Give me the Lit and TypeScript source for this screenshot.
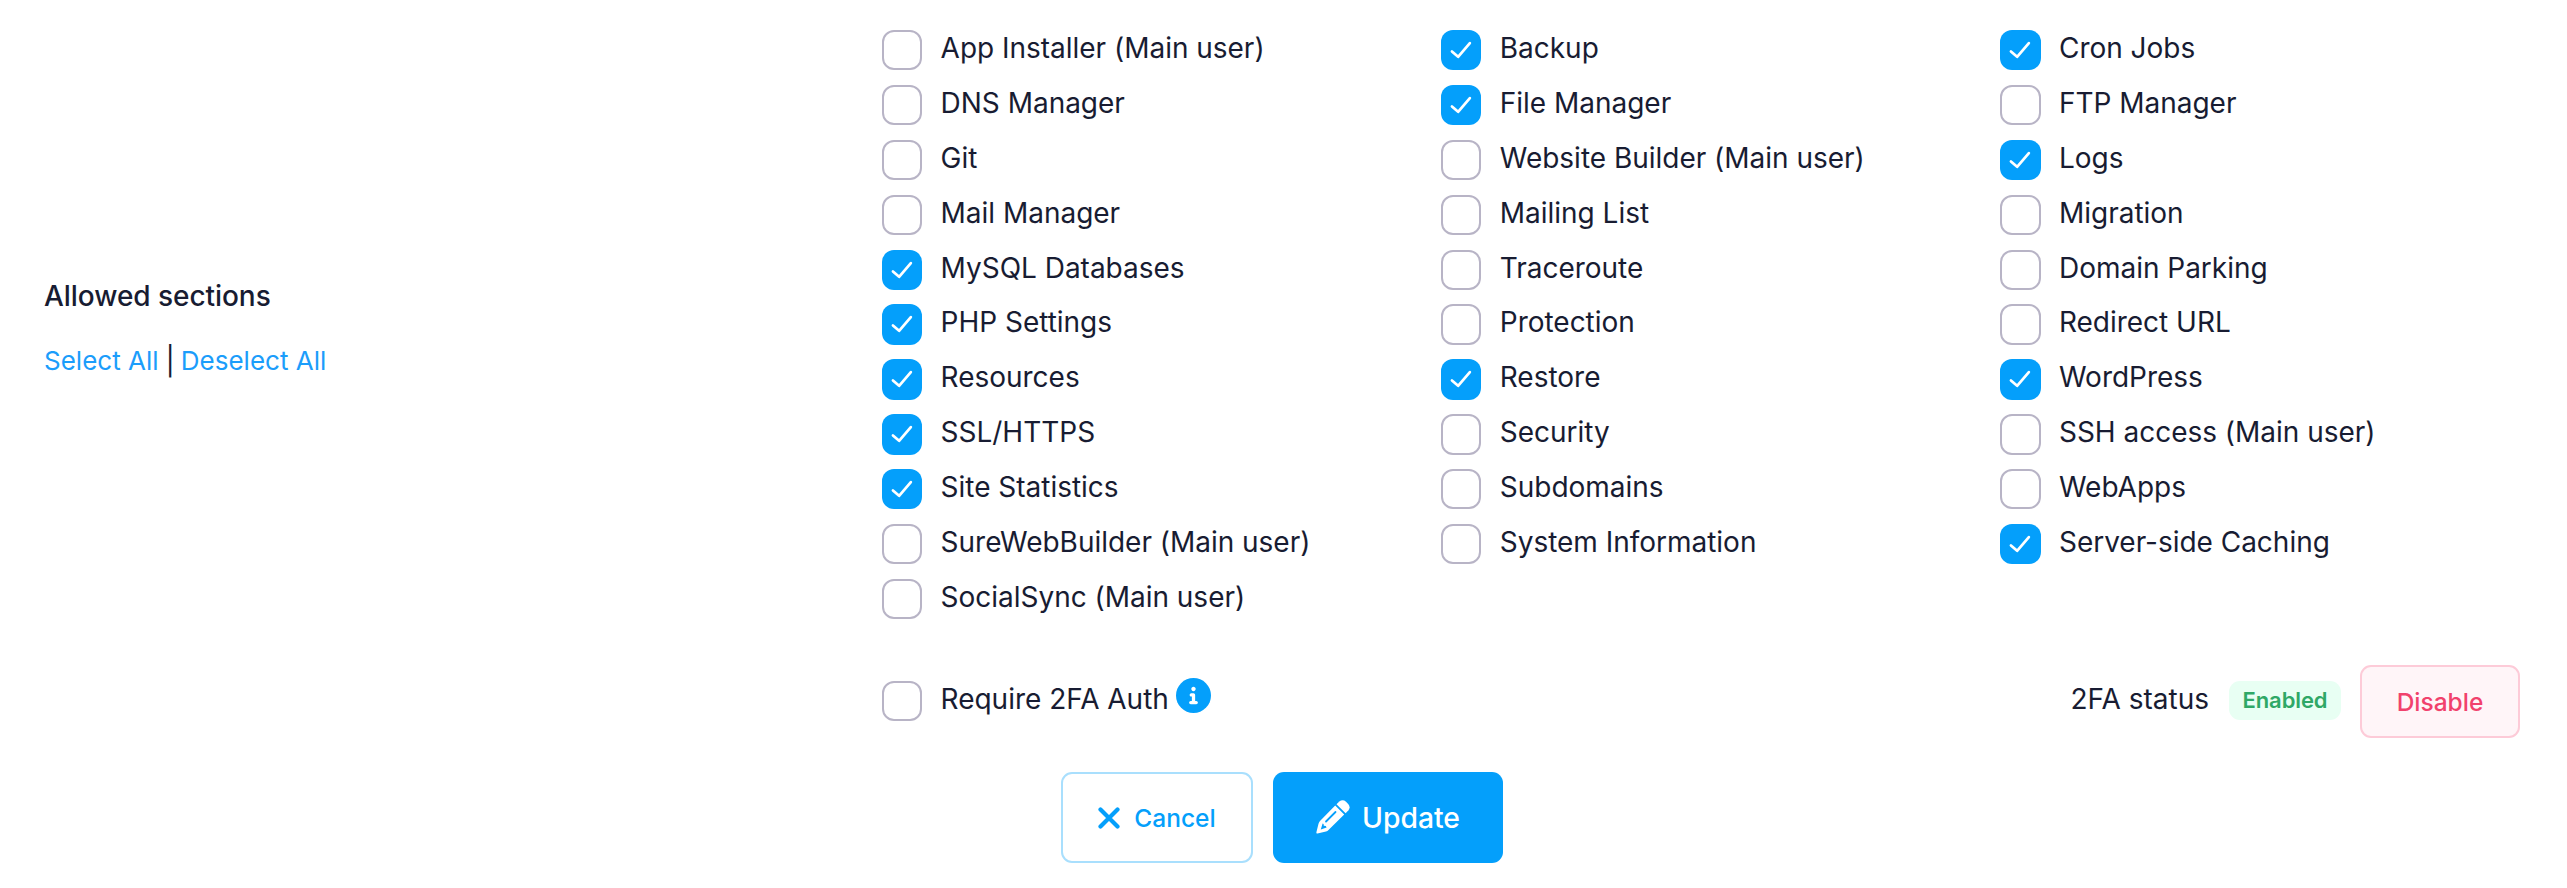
import { LitElement, html, css } from "lit";
import { customElement, property } from "lit/decorators.js";

type Item = [string, boolean];

const COLUMNS: Item[][] = [
  [
    ["App Installer (Main user)", false],
    ["DNS Manager", false],
    ["Git", false],
    ["Mail Manager", false],
    ["MySQL Databases", true],
    ["PHP Settings", true],
    ["Resources", true],
    ["SSL/HTTPS", true],
    ["Site Statistics", true],
    ["SureWebBuilder (Main user)", false],
    ["SocialSync (Main user)", false],
  ],
  [
    ["Backup", true],
    ["File Manager", true],
    ["Website Builder (Main user)", false],
    ["Mailing List", false],
    ["Traceroute", false],
    ["Protection", false],
    ["Restore", true],
    ["Security", false],
    ["Subdomains", false],
    ["System Information", false],
  ],
  [
    ["Cron Jobs", true],
    ["FTP Manager", false],
    ["Logs", true],
    ["Migration", false],
    ["Domain Parking", false],
    ["Redirect URL", false],
    ["WordPress", true],
    ["SSH access (Main user)", false],
    ["WebApps", false],
    ["Server-side Caching", true],
  ],
];

@customElement("check-item")
export class CheckItem extends LitElement {
  @property() label = "";
  @property({ type: Boolean }) checked = false;

  static styles = css`
    :host {
      display: flex;
      height: 54.9px;
    }
    .box {
      box-sizing: border-box;
      flex: none;
      width: 40.3px;
      height: 40.3px;
      border: 2px solid #b8b4c6;
      border-radius: 12px;
      background: #fff;
    }
    .on {
      border: 0;
      background: #049ffb;
    }
    .mark {
      display: block;
      width: 100%;
      height: 100%;
    }
    .label {
      margin-left: 18.3px;
      margin-top: 1px;
      line-height: 34px;
      letter-spacing: -0.02px;
      white-space: nowrap;
    }
  `;

  render() {
    return html`
      ${this.checked
        ? html`<span class="box on"
            ><svg class="mark" viewBox="0 0 40.5 40.5">
              <path d="M11 21.5L17.2 27L29 13.2" fill="none" stroke="#fff" stroke-width="2.700" stroke-linecap="round" stroke-linejoin="round" /></svg
          ></span>`
        : html`<span class="box"></span>`}
      <span class="label">${this.label}</span>
    `;
  }
}

@customElement("app-root")
export class AppRoot extends LitElement {
  static styles = css`
    :host {
      display: block;
      box-sizing: border-box;
      height: 888px;
      padding: 30px 47px 0 44px;
      overflow: hidden;
      background: #fff;
      color: #181c32;
      font-family: Inter, sans-serif;
      font-size: 28px;
    }
    .sections {
      display: grid;
      grid-template-columns: 838px 1fr;
      height: 635px;
    }
    .side {
      padding-top: 248px;
    }
    .title {
      font-weight: 500;
      line-height: 36px;
      letter-spacing: -0.05px;
    }
    .links {
      display: flex;
      margin-top: 29px;
      font-size: 26px;
      line-height: 36px;
      white-space: pre;
    }
    .link {
      color: #1b9dfb;
    }
    .bar {
      margin: 0 6px 0 7px;
      font-size: 28px;
    }
    .columns {
      display: grid;
      grid-template-columns: repeat(3, 559.2px);
      align-items: start;
    }
    .auth {
      display: flex;
      align-items: flex-start;
      height: 107px;
      padding-left: 838px;
    }
    .require {
      margin-top: 16px;
    }
    .info {
      width: 35px;
      height: 35px;
      margin: 13px auto 0 7px;
    }
    .status {
      margin: 17px 20px 0 0;
      line-height: 34px;
    }
    .badge {
      box-sizing: border-box;
      width: 112px;
      height: 39px;
      margin: 16px 19px 0 0;
      border-radius: 11px;
      background: #e8fff3;
      color: #2fa866;
      font-size: 22px;
      font-weight: 600;
      line-height: 39px;
      letter-spacing: -0.1px;
      text-align: center;
    }
    .btn {
      box-sizing: border-box;
      display: flex;
      align-items: center;
      justify-content: center;
      border-radius: 11px;
      font-weight: 500;
    }
    .disable {
      width: 160px;
      height: 73px;
      border: 2px solid #fdcbd8;
      background: #fff5f8;
      color: #f1416c;
      font-size: 24.500px;
    }
    .actions {
      display: flex;
      gap: 20px;
      padding-left: 1017px;
    }
    .cancel {
      width: 192px;
      height: 91px;
      border: 2px solid #a9dffd;
      color: #049ffb;
      font-size: 24.500px;
    }
    .update {
      width: 230px;
      height: 91px;
      background: #049ffb;
      color: #fff;
      font-size: 28.300px;
    }
    .x {
      width: 22px;
      height: 22px;
      margin-right: 14px;
    }
    .pencil {
      width: 34px;
      height: 34px;
      margin: 0 12px 2px 0;
    }
  `;

  render() {
    return html`
      <div class="sections">
        <div class="side">
          <div class="title">Allowed sections</div>
          <div class="links">
            <span class="link">Select All</span><span class="bar">|</span><span class="link">Deselect All</span>
          </div>
        </div>
        <div class="columns">
          ${COLUMNS.map(
            (col) => html`<div>
              ${col.map(([label, on]) => html`<check-item .label=${label} .checked=${on}></check-item>`)}
            </div>`
          )}
        </div>
      </div>
      <div class="auth">
        <check-item class="require" label="Require 2FA Auth"></check-item>
        <svg class="info" viewBox="0 0 512 512">
          <path fill="#049ffb" d="M256 0a256 256 0 1 0 0 512a256 256 0 1 0 0-512z" />
          <path fill="#fff" d="M256 128c17.700 0 32 14.300 32 32s-14.300 32-32 32s-32-14.300-32-32s14.300-32 32-32zM296 384h-80c-13.300 0-24-10.700-24-24s10.700-24 24-24h16v-64h-8c-13.300 0-24-10.700-24-24s10.700-24 24-24h32c13.300 0 24 10.700 24 24v88h16c13.300 0 24 10.700 24 24s-10.700 24-24 24z" />
        </svg>
        <span class="status">2FA status</span>
        <span class="badge">Enabled</span>
        <span class="btn disable">Disable</span>
      </div>
      <div class="actions">
        <span class="btn cancel"
          ><svg class="x" viewBox="0 0 22 22">
            <path d="M2.500 2.500L19.500 19.500M19.500 2.500L2.500 19.500" stroke="#049ffb" stroke-width="4.200" stroke-linecap="round" /></svg
          >Cancel</span
        >
        <span class="btn update"
          ><svg class="pencil" viewBox="0 0 34 34">
            <path fill="#fff" d="M20.500 4.200L23.300 1.500Q26.800 -1 30 1.700L32.200 3.900Q34.800 7 32.500 10.200L29.600 13.200Z" />
            <path fill="#fff" d="M19.200 5.600L28.200 14.600L12.500 30Q11.500 31 10 31.500L1.500 33.500Q0 33.800 .4 32.300L2.500 23.800Q3 22 4 21Z" />
            <path d="M19.500 12L10 21.500" stroke="#049ffb" stroke-width="1.800" stroke-linecap="round" />
            <path fill="#049ffb" d="M6.600 23.600L4.800 29.400L10.600 27.600L9.800 26L7.800 25.800L7.600 24Z" />
          </svg>Update</span
        >
      </div>
    `;
  }
}
